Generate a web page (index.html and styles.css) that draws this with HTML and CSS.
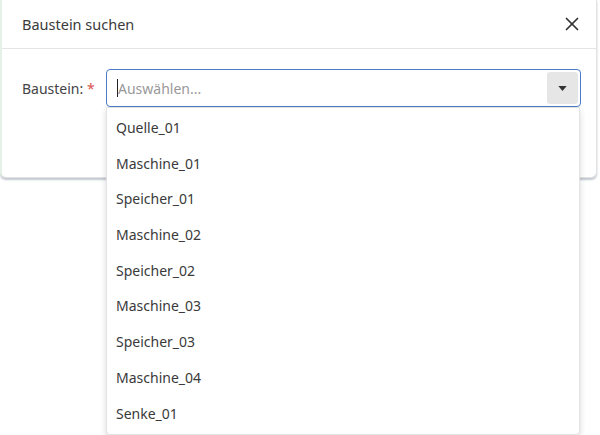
FILE: index.html
```html
<!DOCTYPE html>
<html lang="de">
<head>
    <meta charset="UTF-8">
    <title>Baustein suchen</title>
    <link rel="stylesheet" href="styles.css">
</head>
<body>
    <div class="modal">
        <div class="modal-header">
            <span class="modal-title">Baustein suchen</span>
            <button class="close">
                <svg viewBox="0 0 16 16" width="16" height="16" stroke="currentColor" stroke-width="1.7" stroke-linecap="round"><line x1="2.5" y1="2.5" x2="13.5" y2="13.5"/><line x1="13.5" y1="2.5" x2="2.5" y2="13.5"/></svg>
            </button>
        </div>
        <div class="modal-body">
            <label class="field-label">Baustein: <span class="req">*</span></label>
            <div class="select">
                <div class="select-input">
                    <span class="caret-cursor"></span>
                    <span class="placeholder">Auswählen...</span>
                </div>
                <div class="select-toggle">
                    <svg viewBox="0 0 10 6" width="9" height="5"><path d="M0 0h10L5 6z" fill="#333"/></svg>
                </div>
                <ul class="dropdown">
                    <li>Quelle_01</li>
                    <li>Maschine_01</li>
                    <li>Speicher_01</li>
                    <li>Maschine_02</li>
                    <li>Speicher_02</li>
                    <li>Maschine_03</li>
                    <li>Speicher_03</li>
                    <li>Maschine_04</li>
                    <li>Senke_01</li>
                </ul>
            </div>
        </div>
    </div>
</body>
</html>
```

FILE: styles.css
```css
html, body {
    min-height: 435px;
}
body {
    margin: 0;
    background: #fff;
    font-family: "Noto Sans", "Open Sans", sans-serif;
    font-size: 14px;
    color: #333;
}
.modal {
    width: 597px;
    height: 178px;
    box-sizing: border-box;
    background: #fff;
    border: 1px solid #e2e2e2;
    border-left: 2px solid #e6f0e7;
    border-top: none;
    border-radius: 0 0 6px 6px;
    box-shadow: 0 2px 2px rgba(120, 130, 150, 0.45);
}
.modal-header {
    display: flex;
    align-items: center;
    justify-content: space-between;
    height: 49px;
    box-sizing: border-box;
    padding: 0 16px 0 20px;
    border-bottom: 1px solid #e5e5e5;
}
.modal-title {
    font-size: 14.5px;
    color: #3a3a3a;
}
.close {
    border: none;
    background: none;
    padding: 0;
    color: #333;
    display: flex;
    cursor: pointer;
}
.modal-body {
    display: flex;
    align-items: center;
    padding: 20px 15px 0 20px;
}
.field-label {
    width: 84px;
    color: #444;
}
.req {
    color: #d9534f;
}
.select {
    position: relative;
    flex: 1;
    height: 38px;
    box-sizing: border-box;
    border: 1px solid #4a7cc7;
    border-radius: 4px;
    display: flex;
    align-items: center;
    padding: 2px;
}
.select-input {
    flex: 1;
    display: flex;
    align-items: center;
    padding-left: 8px;
}
.caret-cursor {
    width: 1px;
    height: 18px;
    background: #222;
}
.placeholder {
    color: #999;
}
.select-toggle {
    width: 31px;
    height: 100%;
    background: #e6e6e6;
    border-radius: 3px;
    display: flex;
    align-items: center;
    justify-content: center;
}
.dropdown {
    position: absolute;
    z-index: 10;
    left: -1px;
    right: 0;
    top: 37px;
    margin: 0;
    padding: 2px 0 3px;
    list-style: none;
    background: #fff;
    border: 1px solid #e3e3e3;
    border-radius: 0 0 4px 4px;
    box-shadow: 0 3px 6px rgba(0, 0, 0, 0.15);
}
.dropdown li {
    height: 35.7px;
    line-height: 35.7px;
    padding-left: 9px;
    color: #3a3a3a;
}
```
